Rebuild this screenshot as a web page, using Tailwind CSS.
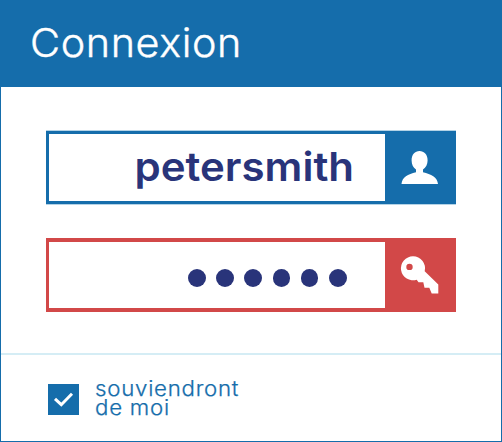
<!DOCTYPE html>
<html lang="fr">
<head>
<meta charset="utf-8">
<title>Connexion</title>
<script src="https://cdn.jsdelivr.net/npm/@tailwindcss/browser@4"></script>
</head>
<body class="bg-white">
<form class="flex h-[442px] w-[502px] flex-col overflow-hidden border border-[#156dab] bg-white font-['Inter','Lato',sans-serif]">
  <header class="flex h-[86px] shrink-0 items-center bg-[#156dab] pl-[29px]">
    <h1 class="origin-left scale-x-[1.045] text-[39.500px] leading-none font-light tracking-[0.600px] whitespace-nowrap text-white [-webkit-text-stroke:0.4px_#fff]">Connexion</h1>
  </header>
  <main class="flex h-[266px] shrink-0 flex-col gap-[34px] pt-[44px] pl-[45px]">
    <div class="flex h-[73px] w-[410px] border-3 border-[#156dab] shadow-[0_-1px_0_#b4d3e6,0_1px_0_#b4d3e6]">
      <div class="flex flex-1 items-center justify-end pr-[31px] pb-[2px] text-[40px] leading-none font-semibold whitespace-nowrap text-[#29347a]"><span class="origin-right scale-x-[1.05]">petersmith</span></div>
      <div class="-mr-[3px] w-[71px] bg-[#156dab]">
        <svg class="size-full" viewBox="0 0 71 67" fill="#fff"><path d="M16.500 50C17 43.500 23 40 31 38.300V35.500C28 33.500 26.700 30.500 26.600 26.500C26.500 20.500 30 17 34.500 17S42.700 20.500 42.600 26.500C42.500 30.500 41 33.500 38 35.500V38.300C46 40 52.500 43.500 53 50Z"/></svg>
      </div>
    </div>
    <div class="flex h-[74px] w-[410px] border-4 border-x-3 border-[#d24848]">
      <div class="flex flex-1 items-center justify-end gap-[10.600px] pt-[6px] pr-[38.500px]">
        <i class="size-[17.600px] rounded-full bg-[#29347a]"></i><i class="size-[17.600px] rounded-full bg-[#29347a]"></i><i class="size-[17.600px] rounded-full bg-[#29347a]"></i><i class="size-[17.600px] rounded-full bg-[#29347a]"></i><i class="size-[17.600px] rounded-full bg-[#29347a]"></i><i class="size-[17.600px] rounded-full bg-[#29347a]"></i>
      </div>
      <div class="-mr-[3px] w-[71px] bg-[#d24848]">
        <svg class="size-full" viewBox="0 0 71 66" fill="#fff"><path fill-rule="evenodd" d="M28 14.300A12 12 0 0 1 39.700 29.300L53.300 42.500V51.500H46.700L44.300 45.700H39.500L38.300 40.300H33.500L31.700 37.700A12 12 0 1 1 28 14.300ZM24.500 21.700A3.200 3.200 0 1 0 24.500 28.100A3.200 3.200 0 1 0 24.500 21.700Z"/></svg>
      </div>
    </div>
  </main>
  <footer class="flex h-[88px] shrink-0 border-t-2 border-[#d5edf5] pl-[47px]">
    <label class="flex">
      <span class="mt-[29px] size-[31px] bg-[#156dab]"><svg class="size-full" viewBox="0 0 31 31" fill="none" stroke="#fff" stroke-width="3"><path d="M7 14.800L13.300 20.700L24 9.800"/></svg></span>
      <span class="mt-[25px] ml-[16px] flex origin-left scale-x-[1.06] flex-col gap-[1px] text-[21px] leading-[18px] font-light tracking-[0.700px] whitespace-nowrap text-[#156dab] [-webkit-text-stroke:0.25px_#156dab]"><span class="h-[18px]">souviendront</span><span class="h-[18px]">de moi</span></span>
    </label>
  </footer>
</form>
</body>
</html>
